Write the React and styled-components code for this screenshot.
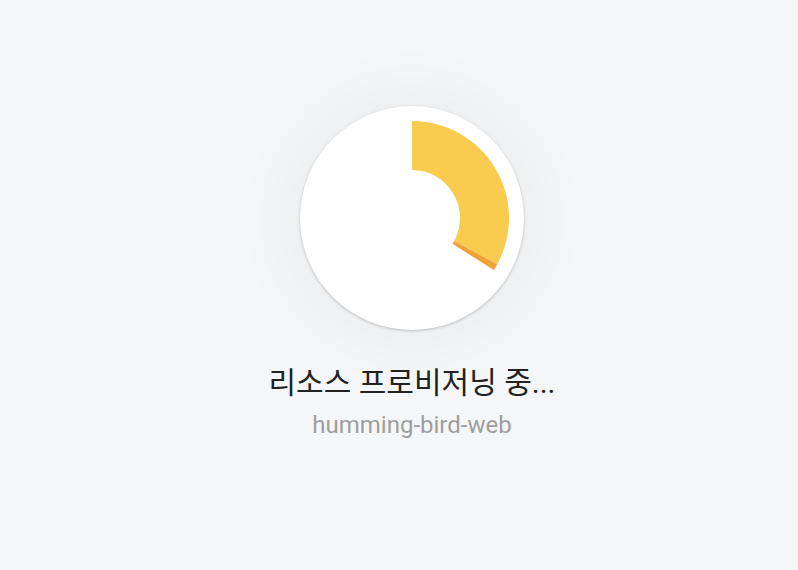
import React from "react";
import styled, { createGlobalStyle } from "styled-components";

const Global = createGlobalStyle`
  html, body { margin: 0; padding: 0; height: 100%; }
  body { background: #f5f6f8; font-family: Roboto, "Noto Sans CJK KR", sans-serif; }
  #root { height: 100%; }
`;

const Page = styled.div`
  height: 570px;
  display: flex;
  flex-direction: column;
  align-items: center;
  padding: 106px 0 0 26px;
  box-sizing: border-box;
  background: #f5f6f8;
`;

const Halo = styled.div`
  width: 224px;
  height: 224px;
  border-radius: 50%;
  background: #ffffff;
  box-shadow: 0 1px 3px rgba(0, 0, 0, 0.22), 0 0 60px 20px rgba(0, 0, 0, 0.035);
  display: flex;
  align-items: center;
  justify-content: center;
`;

const Title = styled.div`
  margin-top: 33px;
  font-family: Roboto, "Noto Sans CJK KR", sans-serif;
  font-size: 30px;
  line-height: 40px;
  color: #222222;
`;

const Subtitle = styled.div`
  margin-top: 7px;
  font-family: Roboto, sans-serif;
  font-size: 24px;
  line-height: 30px;
  color: #9e9e9e;
`;

function Gauge() {
  return (
    <svg width="224" height="224" viewBox="0 0 224 224">
      <path
        d="M112 15 A97 97 0 0 1 197.24 158.29 L154.18 134.91 A48 48 0 0 0 112 64 Z"
        fill="#f9cc50"
      />
      <path
        d="M197.24 158.29 A97 97 0 0 1 193.81 164.12 L152.48 137.79 A48 48 0 0 0 154.18 134.91 Z"
        fill="#f2a13a"
      />
    </svg>
  );
}

export default function App() {
  return (
    <>
      <Global />
      <Page>
        <Halo>
          <Gauge />
        </Halo>
        <Title>리소스 프로비저닝 중...</Title>
        <Subtitle>humming-bird-web</Subtitle>
      </Page>
    </>
  );
}
